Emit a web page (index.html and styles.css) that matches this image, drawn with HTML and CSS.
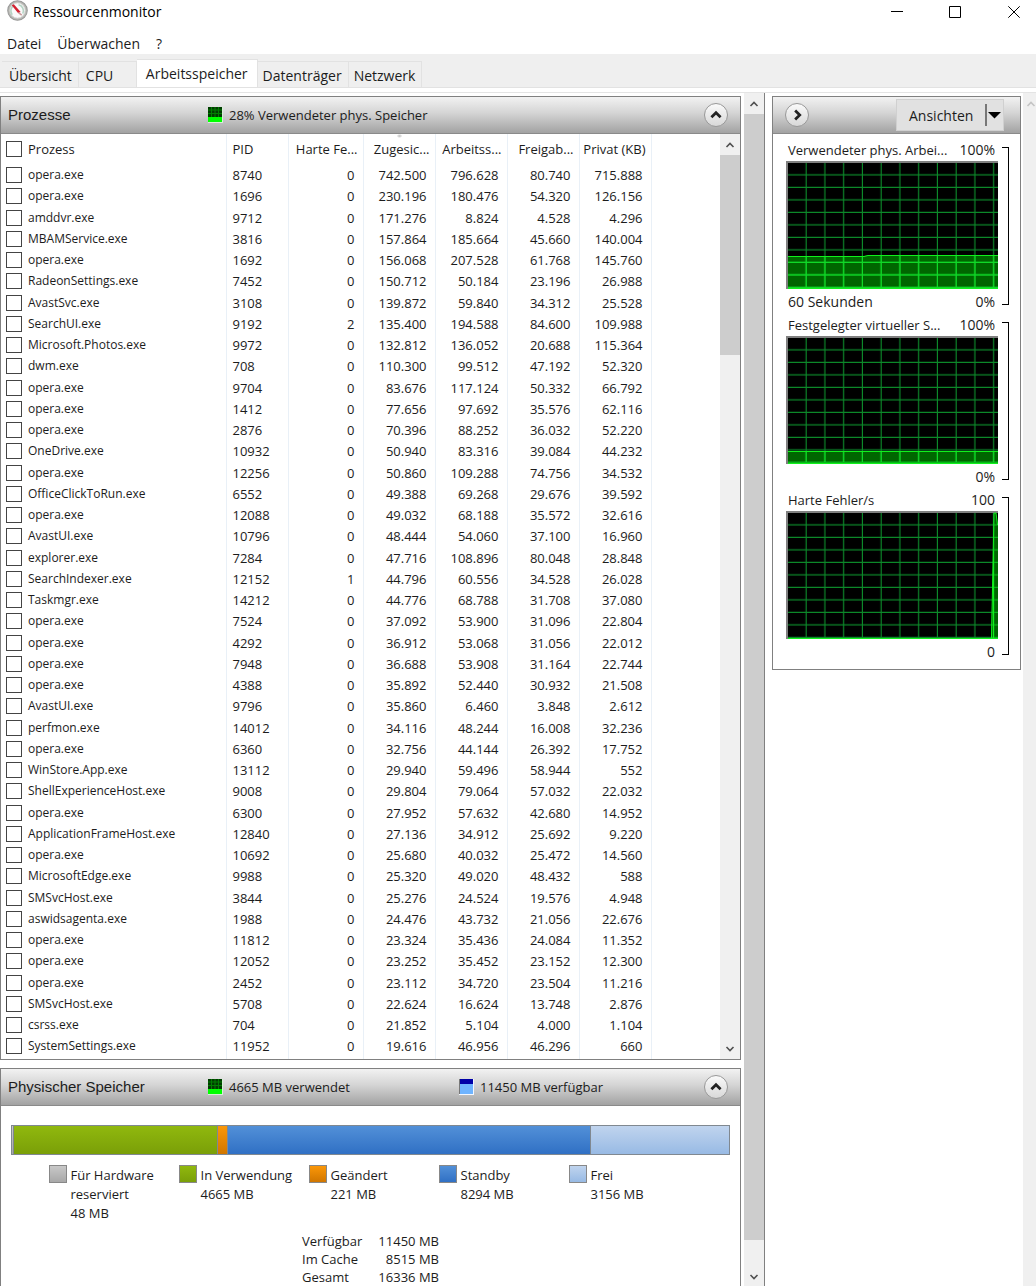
FILE: index.html
```
<!doctype html>
<html lang="de">
  <head>
    <meta charset="utf-8">
    <meta name="viewport" content="width=device-width, initial-scale=1">
    <title>Ressourcenmonitor</title>
    <link rel="stylesheet" href="styles.css">
  </head>
  <body>
    <!-- shared symbols -->
    <svg class="defs" width="0" height="0">
      <defs>
        <pattern id="grid" x="2" y="2" width="18.75" height="12.5" patternUnits="userSpaceOnUse">
          <path d="M18.2 0V12.5M0 12H18.75" stroke="#0c8a2a" stroke-width="1.2" fill="none"/>
        </pattern>
        <pattern id="grid-bright" x="2" y="2" width="18.75" height="12.5" patternUnits="userSpaceOnUse">
          <path d="M18.2 0V12.5M0 12H18.75" stroke="#10d828" stroke-width="1.2" fill="none"/>
        </pattern>
        <symbol id="up" viewBox="0 0 10 10"><path d="M1.5 7L5 3.5L8.5 7" fill="none" stroke="currentColor" stroke-width="1.6"/></symbol>
        <symbol id="down" viewBox="0 0 10 10"><path d="M1.5 3L5 6.5L8.5 3" fill="none" stroke="currentColor" stroke-width="1.6"/></symbol>
        <symbol id="used" viewBox="0 0 15 16">
          <path d="M0 0H15V16H0Z" fill="#d8f0d8"/>
          <path d="M0 0H14V15H0Z" fill="#003c00"/>
          <path d="M3.5 0V10M7 0V10M10.5 0V10M0 3H14M0 6.500H14" stroke="#008000" fill="none"/>
          <path d="M0 10H14V15H0Z" fill="#0f0"/>
        </symbol>
        <symbol id="free" viewBox="0 0 15 16">
          <path d="M0 0H15V16H0Z" fill="#f4f8ff"/>
          <path d="M0 0H14V15H0Z" fill="#6fb4ff"/>
          <path d="M0 0H14V5H0Z" fill="#0000a8"/>
          <path d="M.5 0V15" stroke="#777"/>
        </symbol>
      </defs>
    </svg>

    <header class="titlebar">
      <svg class="logo" viewBox="0 0 20 20">
        <circle cx="10" cy="10" r="9.300" fill="#b9bab4" stroke="#999"/>
        <circle cx="10" cy="10" r="7.200" fill="#fafafa" stroke="#ddd" stroke-width=".8"/>
        <path d="M5 14A6 6 0 0 1 6 5.500M11 4.500A6 6 0 0 1 15 13" fill="none" stroke="#b5d3c4" stroke-width="1.500"/>
        <path d="M4.500 5L6.500 4L13 11.500L10.500 12.500Z" fill="#d3202f"/>
        <path d="M11 12L14 14.500" stroke="#c89a9a" stroke-width="1.500"/>
      </svg>
      <h1>Ressourcenmonitor</h1>
      <div class="window-buttons">
        <button type="button" aria-label="Minimieren"><svg viewBox="0 0 12 12"><path d="M0 5.500H12"/></svg></button>
        <button type="button" aria-label="Maximieren"><svg viewBox="0 0 12 12"><path d="M.5 .5H11.500V11.500H.5Z"/></svg></button>
        <button type="button" aria-label="Schließen"><svg viewBox="0 0 12 12"><path d="M.3 .3L11.700 11.700M11.700 .3L.3 11.700"/></svg></button>
      </div>
    </header>

    <nav class="menu">
      <a href="#datei">Datei</a>
      <a href="#ueberwachen">Überwachen</a>
      <a href="#hilfe">?</a>
    </nav>

    <div class="tabs" role="tablist">
      <button type="button" role="tab">Übersicht</button>
      <button type="button" role="tab" class="tab-cpu">CPU</button>
      <button type="button" role="tab" class="active" aria-selected="true">Arbeitsspeicher</button>
      <button type="button" role="tab">Datenträger</button>
      <button type="button" role="tab">Netzwerk</button>
    </div>

    <main class="content">
      <div class="left">
        <section class="panel">
          <div class="panel-head">
            <h2>Prozesse</h2>
            <span class="stat"><svg><use href="#used"/></svg>28% Verwendeter phys. Speicher</span>
            <button type="button" class="round" aria-label="Reduzieren"><svg viewBox="0 0 24 24"><path d="M7 14.500L12 9.500L17 14.500"/></svg></button>
          </div>
          <div class="process-list">
            <table>
              <colgroup>
                <col class="c-name"><col class="c-pid"><col class="c-faults"><col class="c-num"><col class="c-num"><col class="c-num"><col class="c-num"><col>
              </colgroup>
              <thead>
                <tr>
                  <th><label><input type="checkbox">Prozess</label></th>
                  <th>PID</th>
                  <th>Harte Fe...</th>
                  <th class="sorted">Zugesic...</th>
                  <th>Arbeitss...</th>
                  <th>Freigab...</th>
                  <th>Privat (KB)</th>
                  <td></td>
                </tr>
              </thead>
              <tbody id="processes"></tbody>
            </table>
            <div class="scrollbar">
              <button type="button" aria-label="Nach oben"><svg><use href="#up"/></svg></button>
              <div class="thumb thumb-list"></div>
              <button type="button" aria-label="Nach unten"><svg><use href="#down"/></svg></button>
            </div>
          </div>
        </section>

        <section class="panel panel-memory">
          <div class="panel-head">
            <h2>Physischer Speicher</h2>
            <span class="stat"><svg><use href="#used"/></svg>4665 MB verwendet</span>
            <span class="stat"><svg><use href="#free"/></svg>11450 MB verfügbar</span>
            <button type="button" class="round" aria-label="Reduzieren"><svg viewBox="0 0 24 24"><path d="M7 14.500L12 9.500L17 14.500"/></svg></button>
          </div>
          <div class="memory">
            <div class="memory-bar">
              <div class="hardware" style="flex-grow: 48"></div>
              <div class="in-use" style="flex-grow: 4665"></div>
              <div class="modified" style="flex-grow: 221"></div>
              <div class="standby" style="flex-grow: 8294"></div>
              <div class="unused" style="flex-grow: 3156"></div>
            </div>
            <ul class="legend">
              <li><i class="hardware"></i><span>Für Hardware reserviert<br>48 MB</span></li>
              <li><i class="in-use"></i><span>In Verwendung<br>4665 MB</span></li>
              <li><i class="modified"></i><span>Geändert<br>221 MB</span></li>
              <li><i class="standby"></i><span>Standby<br>8294 MB</span></li>
              <li><i class="unused"></i><span>Frei<br>3156 MB</span></li>
            </ul>
            <dl class="totals">
              <dt>Verfügbar</dt><dd>11450 MB</dd>
              <dt>Im Cache</dt><dd>8515 MB</dd>
              <dt>Gesamt</dt><dd>16336 MB</dd>
            </dl>
          </div>
        </section>
      </div>

      <div class="scrollbar">
        <button type="button" aria-label="Nach oben"><svg><use href="#up"/></svg></button>
        <div class="thumb thumb-page"></div>
        <button type="button" class="page-down" aria-label="Nach unten"><svg><use href="#down"/></svg></button>
      </div>

      <aside class="right">
        <section class="panel">
          <div class="panel-head">
            <button type="button" class="round" aria-label="Ausblenden"><svg viewBox="0 0 24 24"><path d="M10 7L15 12L10 17"/></svg></button>
            <button type="button" class="views">Ansichten<svg viewBox="0 0 16 22"><path d="M1 0V22" stroke="#777" stroke-width="2"/><path d="M3 8H16L9.500 14.500Z"/></svg></button>
          </div>
          <div class="charts">
            <div class="chart">
              <div class="chart-main">
                <div class="chart-row"><span class="chart-name">Verwendeter phys. Arbei...</span><span>100%</span></div>
                <svg viewBox="0 0 212 128" preserveAspectRatio="none">
                  <path d="M2 2H212V128H2Z"/>
                  <path d="M2 2H212V128H2Z" fill="url(#grid)"/>
                  <path class="area" d="M2 95H78L82 94H212V128H2Z"/>
                  <path d="M2 95H212V128H2Z" fill="url(#grid-bright)"/>
                  <path class="line" d="M2 95.500H78L82 94.500H212M2 127.500H212"/>
                </svg>
                <div class="chart-row chart-foot"><span>60 Sekunden</span><span>0%</span></div>
              </div>
              <div class="bracket"></div>
            </div>
            <div class="chart">
              <div class="chart-main">
                <div class="chart-row"><span class="chart-name">Festgelegter virtueller S...</span><span>100%</span></div>
                <svg viewBox="0 0 212 128" preserveAspectRatio="none">
                  <path d="M2 2H212V128H2Z"/>
                  <path d="M2 2H212V128H2Z" fill="url(#grid)"/>
                  <path class="area" d="M2 115H212V128H2Z"/>
                  <path d="M2 116H212V126H2Z" fill="url(#grid-bright)"/>
                  <path class="line" d="M2 115.500H212M2 127.500H212"/>
                </svg>
                <div class="chart-row chart-foot"><span></span><span>0%</span></div>
              </div>
              <div class="bracket"></div>
            </div>
            <div class="chart">
              <div class="chart-main">
                <div class="chart-row"><span class="chart-name">Harte Fehler/s</span><span>100</span></div>
                <svg viewBox="0 0 212 128" preserveAspectRatio="none">
                  <path d="M2 2H212V128H2Z"/>
                  <path d="M2 2H212V128H2Z" fill="url(#grid)"/>
                  <path class="area" d="M205 127L208.500 2H210L212 14V127Z"/>
                  <path class="line" d="M205.500 127L208 2H210L211.500 14M207.500 40V127M2 127.500H212"/>
                </svg>
                <div class="chart-row chart-foot"><span></span><span>0</span></div>
              </div>
              <div class="bracket"></div>
            </div>
          </div>
        </section>
      </aside>
      <div class="scrollbar scrollbar-off"><button type="button" aria-label="Nach oben" disabled><svg><use href="#up"/></svg></button></div>
    </main>
    <script src="processes.js"></script>
  </body>
</html>
```
FILE: styles.css
```
* {
  box-sizing: border-box;
}

body {
  margin: 0;
  height: 100vh;
  display: flex;
  flex-direction: column;
  overflow: hidden;
  background: #fff;
  color: #1c1c1c;
  font: 13px/19px "Open Sans", "Noto Sans", sans-serif;
}

button {
  margin: 0;
  padding: 0;
  border: 0;
  background: none;
  color: inherit;
  font: inherit;
}

h1, h2, ul, dl, dd {
  margin: 0;
  padding: 0;
  font-weight: normal;
}

.defs {
  position: absolute;
}

/* title, menu and tabs */

.titlebar {
  display: flex;
  flex: none;
  height: 30px;
  padding-left: 7px;
  color: #000;
}

.logo {
  width: 21px;
  height: 21px;
}

.titlebar h1 {
  margin-left: 5px;
  font-size: 14px;
  line-height: 24px;
}

.window-buttons {
  display: flex;
  margin-left: auto;
}

.window-buttons button {
  display: flex;
  justify-content: center;
  align-items: center;
  width: 58px;
  height: 24px;
}

.window-buttons button:last-child {
  width: 60px;
  margin-right: -8px;
}

.window-buttons svg {
  width: 12px;
  height: 12px;
  fill: none;
  stroke: #000;
}

.menu {
  display: flex;
  flex: none;
  gap: 16px;
  height: 24px;
  padding: 4px 7px 0;
  font-size: 14px;
}

.menu a {
  color: inherit;
  text-decoration: none;
}

.tabs {
  display: flex;
  flex: none;
  align-items: flex-end;
  height: 34px;
  padding-left: 2px;
  background: #efefef;
  border-bottom: 1px solid #e2e2e2;
}

.tabs button {
  height: 26px;
  padding: 2px 6px 0 5px;
  border: 1px solid #e2e2e2;
  border-width: 1px 1px 0 0;
  font-size: 14px;
}

.tabs button:first-child {
  padding-left: 7px;
}

.tabs .tab-cpu {
  width: 58px;
  padding-left: 7px;
  text-align: left;
}

.tabs .active {
  height: 28px;
  padding: 0 9px;
  background: #fff;
}

/* panels */

.content {
  display: flex;
  flex: 1;
  min-height: 0;
  margin-top: 4px;
  border-top: 1px solid #e4e4e4;
}

.left {
  flex: 1;
  min-width: 0;
  padding: 3px 3px 0 0;
  overflow: hidden;
}

.panel {
  border: 1px solid #808080;
}

.panel-memory {
  margin-top: 8px;
}

.panel-head {
  display: flex;
  align-items: center;
  height: 37px;
  padding: 0 12px 0 7px;
  background: linear-gradient(#f2f2f2, #d4d4d4 45%, #a2a2a2);
  border-bottom: 1px solid #8a8a8a;
}

.panel-head h2 {
  flex: none;
  width: 200px;
  font: 15px/20px "Liberation Sans", Arial, sans-serif;
}

.stat {
  display: flex;
  flex: none;
  align-items: center;
  gap: 6px;
  width: 251px;
  white-space: nowrap;
}

.stat + .stat {
  width: auto;
}

.stat svg {
  width: 15px;
  height: 16px;
}

.round {
  flex: none;
  width: 24px;
  height: 24px;
  margin-left: auto;
  border: 1px solid #999;
  border-radius: 50%;
  background: linear-gradient(#fafafa, #d8d8d8);
}

.round svg {
  display: block;
  width: 22px;
  height: 22px;
  fill: none;
  stroke: #222;
  stroke-width: 3;
}

/* process table */

.process-list {
  display: flex;
}

table {
  flex: 1;
  width: 100%;
  table-layout: fixed;
  border-collapse: collapse;
}

.c-name { width: 225px; }
.c-pid { width: 62px; }
.c-faults { width: 75px; }
.c-num { width: 72px; }

th, td {
  height: 21px;
  padding: 0 8px 0 0;
  border-right: 1px solid #e9f0f7;
  font-weight: normal;
  line-height: 20px;
  text-align: right;
  white-space: nowrap;
}

thead th {
  height: 30px;
  padding-right: 5px;
}

th:first-child {
  padding: 0 0 0 5px;
  text-align: left;
}

tbody th {
  font-size: 12px;
}

th:nth-child(2),
td:nth-child(2) {
  padding-left: 6px;
  text-align: left;
}

td:last-child {
  border: 0;
}

tbody tr:nth-child(4n + 2) > * {
  height: 22px;
}

tbody tr:last-child > * {
  padding-bottom: 2px;
  height: 24px;
}

th label {
  display: flex;
  align-items: center;
  gap: 6px;
}

input[type="checkbox"] {
  appearance: none;
  width: 16px;
  height: 16px;
  margin: 0;
  border: 1px solid #444;
  background: #fff;
}

.sorted {
  background: radial-gradient(3px 2px at 50% 2px, #bbb, transparent) no-repeat;
}

/* scrollbars */

.scrollbar {
  display: flex;
  flex: none;
  flex-direction: column;
  width: 20px;
  background: #f0f0f0;
  color: #505050;
}

.scrollbar button {
  display: flex;
  flex: none;
  justify-content: center;
  align-items: center;
  height: 21px;
}

.scrollbar svg {
  width: 10px;
  height: 10px;
}

.scrollbar button:last-child {
  margin-top: auto;
}

.scrollbar .page-down {
  height: 46px;
  padding-top: 28px;
}

.thumb {
  background: #cdcdcd;
}

.thumb-list {
  height: 200px;
}

.thumb-page {
  flex: 1;
}

.scrollbar-off {
  width: 13px;
  color: #c4c4c4;
}

.scrollbar-off button:last-child {
  margin: 0;
  justify-content: flex-end;
}

/* physical memory */

.memory {
  padding: 19px 10px 0;
}

.memory-bar {
  display: flex;
  height: 30px;
  border: 1px solid #808890;
}

.memory-bar div {
  flex-basis: 0;
}

.memory-bar div + div {
  box-shadow: -1px 0 #808890;
}

.hardware { background: linear-gradient(#c8c8c8, #a8a8a8); }
.in-use { background: linear-gradient(#90b80e, #7a9f08); }
.modified { background: linear-gradient(#fb9708, #d07600); }
.standby { background: linear-gradient(#5290d8, #3070c4); }
.unused { background: linear-gradient(#c0d4ee, #98bae4); }

.legend {
  display: flex;
  justify-content: center;
  margin-top: 10px;
  padding-left: 6px;
  list-style: none;
}

.legend li {
  display: flex;
  gap: 4px;
  width: 130px;
}

.legend i {
  flex: none;
  width: 18px;
  height: 18px;
  border: 1px solid #888;
}

.legend span {
  max-width: 94px;
  padding-top: 1px;
}

.totals {
  display: grid;
  grid-template-columns: 66px 71px;
  justify-content: center;
  margin-top: 9px;
  line-height: 18px;
}

.totals dd {
  text-align: right;
}

/* charts */

.right {
  flex: none;
  width: 259px;
  padding: 3px 2px 0 7px;
  border-left: 1px solid #808080;
}

.right .panel-head {
  padding: 0 16px 0 12px;
}

.right .round {
  margin: 0;
}

.views {
  display: flex;
  align-items: center;
  justify-content: space-between;
  width: 108px;
  height: 32px;
  margin-left: auto;
  padding: 0 2px 0 12px;
  border: 1px solid #d0d0d0;
  background: #e1e1e1;
  font-size: 14px;
}

.views svg {
  width: 16px;
  height: 22px;
}

.charts {
  padding: 5px 11px 5px 13px;
}

.chart {
  display: flex;
  gap: 4px;
}

.chart-main {
  flex: 1;
  min-width: 0;
}

.chart-main svg {
  display: block;
  width: 100%;
  height: 128px;
  background: #808080;
}

.chart-row {
  display: flex;
  justify-content: space-between;
  height: 22px;
  padding: 0 3px 0 2px;
  font-size: 14px;
  line-height: 22px;
  white-space: nowrap;
}

.chart-name {
  font-size: 13px;
}

.chart-foot {
  height: 25px;
  line-height: 26px;
}

.area {
  fill: #0f0;
  fill-opacity: .4;
}

.line {
  fill: none;
  stroke: #10f01c;
}

.bracket {
  width: 7px;
  margin: 8px 0 9px;
  border: 1px solid #000;
  border-left: 0;
}
```
FILE: processes.js
```
// name, PID, hard faults, commit, working set, shareable, private (KB)
var processes = [
  ["opera.exe", "8740", "0", "742.500", "796.628", "80.740", "715.888"],
  ["opera.exe", "1696", "0", "230.196", "180.476", "54.320", "126.156"],
  ["amddvr.exe", "9712", "0", "171.276", "8.824", "4.528", "4.296"],
  ["MBAMService.exe", "3816", "0", "157.864", "185.664", "45.660", "140.004"],
  ["opera.exe", "1692", "0", "156.068", "207.528", "61.768", "145.760"],
  ["RadeonSettings.exe", "7452", "0", "150.712", "50.184", "23.196", "26.988"],
  ["AvastSvc.exe", "3108", "0", "139.872", "59.840", "34.312", "25.528"],
  ["SearchUI.exe", "9192", "2", "135.400", "194.588", "84.600", "109.988"],
  ["Microsoft.Photos.exe", "9972", "0", "132.812", "136.052", "20.688", "115.364"],
  ["dwm.exe", "708", "0", "110.300", "99.512", "47.192", "52.320"],
  ["opera.exe", "9704", "0", "83.676", "117.124", "50.332", "66.792"],
  ["opera.exe", "1412", "0", "77.656", "97.692", "35.576", "62.116"],
  ["opera.exe", "2876", "0", "70.396", "88.252", "36.032", "52.220"],
  ["OneDrive.exe", "10932", "0", "50.940", "83.316", "39.084", "44.232"],
  ["opera.exe", "12256", "0", "50.860", "109.288", "74.756", "34.532"],
  ["OfficeClickToRun.exe", "6552", "0", "49.388", "69.268", "29.676", "39.592"],
  ["opera.exe", "12088", "0", "49.032", "68.188", "35.572", "32.616"],
  ["AvastUI.exe", "10796", "0", "48.444", "54.060", "37.100", "16.960"],
  ["explorer.exe", "7284", "0", "47.716", "108.896", "80.048", "28.848"],
  ["SearchIndexer.exe", "12152", "1", "44.796", "60.556", "34.528", "26.028"],
  ["Taskmgr.exe", "14212", "0", "44.776", "68.788", "31.708", "37.080"],
  ["opera.exe", "7524", "0", "37.092", "53.900", "31.096", "22.804"],
  ["opera.exe", "4292", "0", "36.912", "53.068", "31.056", "22.012"],
  ["opera.exe", "7948", "0", "36.688", "53.908", "31.164", "22.744"],
  ["opera.exe", "4388", "0", "35.892", "52.440", "30.932", "21.508"],
  ["AvastUI.exe", "9796", "0", "35.860", "6.460", "3.848", "2.612"],
  ["perfmon.exe", "14012", "0", "34.116", "48.244", "16.008", "32.236"],
  ["opera.exe", "6360", "0", "32.756", "44.144", "26.392", "17.752"],
  ["WinStore.App.exe", "13112", "0", "29.940", "59.496", "58.944", "552"],
  ["ShellExperienceHost.exe", "9008", "0", "29.804", "79.064", "57.032", "22.032"],
  ["opera.exe", "6300", "0", "27.952", "57.632", "42.680", "14.952"],
  ["ApplicationFrameHost.exe", "12840", "0", "27.136", "34.912", "25.692", "9.220"],
  ["opera.exe", "10692", "0", "25.680", "40.032", "25.472", "14.560"],
  ["MicrosoftEdge.exe", "9988", "0", "25.320", "49.020", "48.432", "588"],
  ["SMSvcHost.exe", "3844", "0", "25.276", "24.524", "19.576", "4.948"],
  ["aswidsagenta.exe", "1988", "0", "24.476", "43.732", "21.056", "22.676"],
  ["opera.exe", "11812", "0", "23.324", "35.436", "24.084", "11.352"],
  ["opera.exe", "12052", "0", "23.252", "35.452", "23.152", "12.300"],
  ["opera.exe", "2452", "0", "23.112", "34.720", "23.504", "11.216"],
  ["SMSvcHost.exe", "5708", "0", "22.624", "16.624", "13.748", "2.876"],
  ["csrss.exe", "704", "0", "21.852", "5.104", "4.000", "1.104"],
  ["SystemSettings.exe", "11952", "0", "19.616", "46.956", "46.296", "660"]
];

var body = document.getElementById("processes");
for (var ii = 0; ii < processes.length; ++ii) {
  var row = processes[ii];
  body.insertAdjacentHTML("beforeend",
    "<tr><th><label><input type=\"checkbox\">" + row[0] + "</label></th><td>" +
    row.slice(1).join("</td><td>") + "</td><td></td></tr>");
}
```
